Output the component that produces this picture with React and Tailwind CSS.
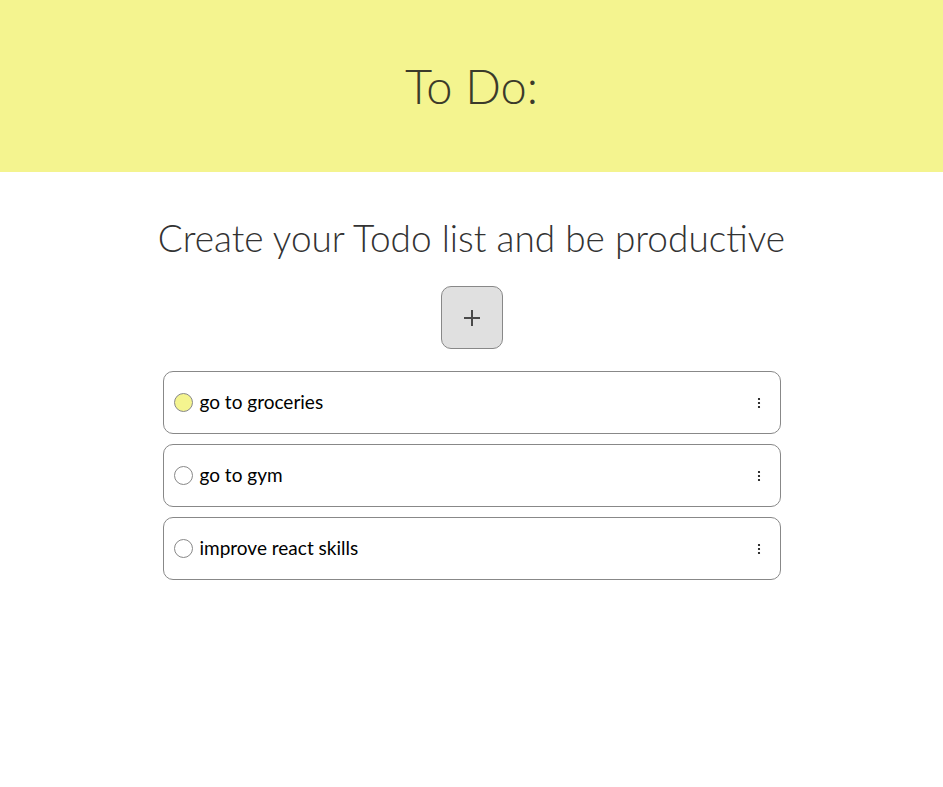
import React from "react";

const todos = [
  { text: "go to groceries", done: true },
  { text: "go to gym", done: false },
  { text: "improve react skills", done: false },
];

function Kebab() {
  return (
    <svg width="4" height="12" viewBox="0 0 4 12" className="text-black">
      <circle cx="2" cy="2" r="1.1" fill="currentColor" />
      <circle cx="2" cy="6" r="1.1" fill="currentColor" />
      <circle cx="2" cy="10" r="1.1" fill="currentColor" />
    </svg>
  );
}

export default function App() {
  return (
    <div className="min-h-[787px] bg-white" style={{ fontFamily: "Lato, 'Noto Sans', sans-serif" }}>
      <header className="h-[172px] bg-[#f4f48f] flex items-center justify-center">
        <h1 className="text-[47px] font-light text-[#3b3a2a] leading-none">To Do:</h1>
      </header>
      <main className="flex flex-col items-center">
        <h2 className="mt-[47px] text-[37px] font-light text-[#333] leading-none">
          Create your Todo list and be productive
        </h2>
        <button className="mt-[30px] w-[62px] h-[63px] rounded-[10px] bg-[#e0e0e0] border border-[#888] flex items-center justify-center text-[#444]">
          <svg width="18" height="18" viewBox="0 0 18 18">
            <path d="M9 1v16M1 9h16" stroke="#4a4a4a" strokeWidth="2" />
          </svg>
        </button>
        <ul className="mt-[22px] w-[618px] flex flex-col gap-[10px]">
          {todos.map((t) => (
            <li
              key={t.text}
              className="h-[63px] rounded-[10px] border border-[#888] flex items-center pl-[10px] pr-[19px]"
            >
              <span
                className={`w-[19px] h-[19px] rounded-full border border-[#888] ${t.done ? "bg-[#f4f48f]" : "bg-white"}`}
              />
              <span className="ml-[7px] text-[19px] font-normal text-black flex-1">{t.text}</span>
              <Kebab />
            </li>
          ))}
        </ul>
      </main>
    </div>
  );
}
